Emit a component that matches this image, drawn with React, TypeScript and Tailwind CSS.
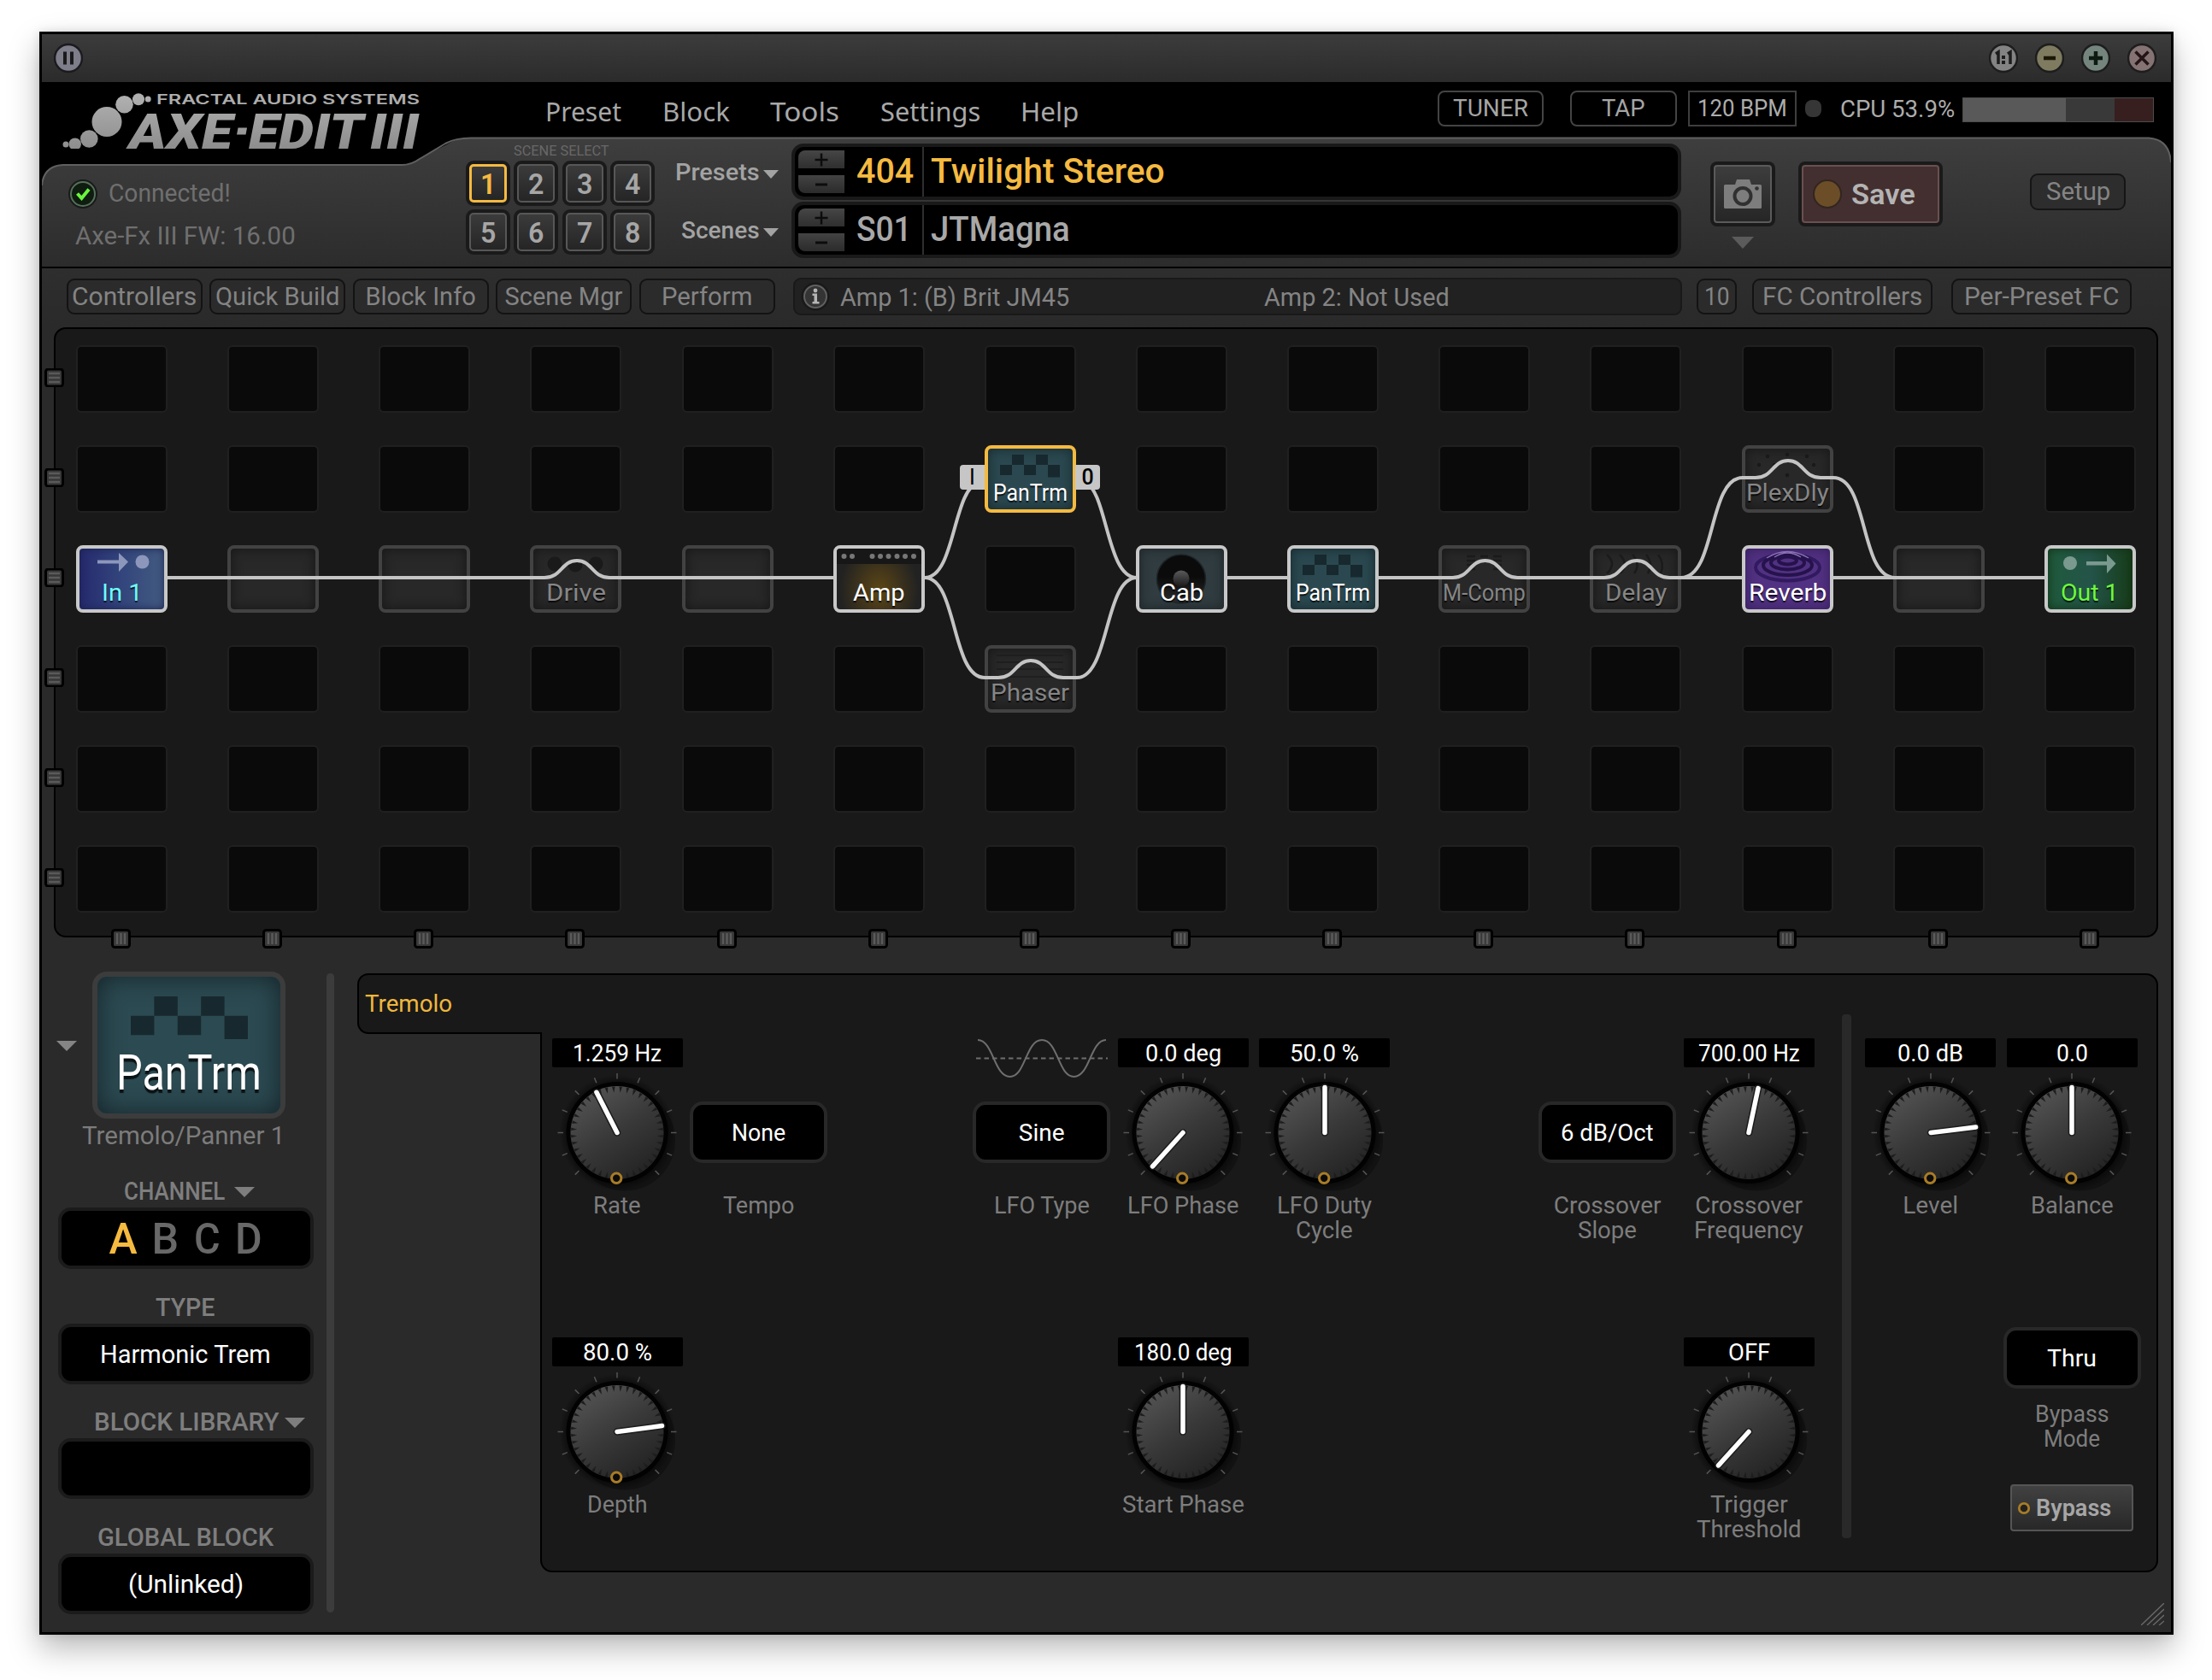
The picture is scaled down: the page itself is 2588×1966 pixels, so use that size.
import { useLayoutEffect, useRef, useState } from 'react';
import type { ReactNode } from 'react';

/* Single line of text, squeezed horizontally to a fixed width like a narrow DIN face. */
function Fit({ w, className = '', children }: { w: number; className?: string; children: ReactNode }) {
  const ref = useRef<HTMLSpanElement>(null);
  const [scale, setScale] = useState(1);
  const width = w + 3;
  useLayoutEffect(() => {
    if (ref.current) setScale(width / ref.current.offsetWidth);
  }, [width]);
  return (
    <span className={`inline-block shrink-0 text-left ${className}`} style={{ width }}>
      <span ref={ref} className="inline-block origin-left whitespace-nowrap" style={{ transform: `scaleX(${scale})` }}>
        {children}
      </span>
    </span>
  );
}

function Tri({ className = '' }: { className?: string }) {
  return (
    <svg viewBox="0 0 24 12" preserveAspectRatio="none" className={`shrink-0 fill-current ${className}`}>
      <path d="M0 0H24L12 12Z" />
    </svg>
  );
}

/* ---------- Title bar ---------- */

function TitleBar() {
  return (
    <div className="flex h-[56px] shrink-0 items-center justify-between bg-linear-to-b from-[#3c3c3c] to-[#2b2b2b] pr-[17px] pl-[14px]">
      <svg width="34" height="36" viewBox="0 0 34 36">
        <circle cx="17" cy="18" r="16" fill="#7d7e89" stroke="#1b1b1f" strokeWidth="2.5" />
        <path d="M13 10.500V25.500M21 10.500V25.500" stroke="#1a1a1c" strokeWidth="4" />
      </svg>
      <div className="flex gap-[20px]">
        <svg width="34" height="36" viewBox="0 0 34 36">
          <circle cx="17" cy="18" r="16" fill="#838383" stroke="#1d1d1d" strokeWidth="2.5" />
          <path d="M8 13L11 11V25M22 13L25 11V25" fill="none" stroke="#1c1c1c" strokeWidth="3.500" />
          <path d="M15 15h4v4h-4zM15 21h4v4h-4z" fill="#1c1c1c" />
        </svg>
        <svg width="34" height="36" viewBox="0 0 34 36">
          <circle cx="17" cy="18" r="16" fill="#7e7b60" stroke="#1d1d1d" strokeWidth="2.5" />
          <path d="M10 18H24" stroke="#1c1804" strokeWidth="4.500" />
        </svg>
        <svg width="34" height="36" viewBox="0 0 34 36">
          <circle cx="17" cy="18" r="16" fill="#74857d" stroke="#1d1d1d" strokeWidth="2.5" />
          <path d="M9 18H25M17 10V26" stroke="#0d1a12" strokeWidth="4.500" />
        </svg>
        <svg width="34" height="36" viewBox="0 0 34 36">
          <circle cx="17" cy="18" r="16" fill="#857374" stroke="#1d1d1d" strokeWidth="2.5" />
          <path d="M9.500 10.500L24.500 25.500M24.500 10.500L9.500 25.500" stroke="#241416" strokeWidth="3.500" />
        </svg>
      </div>
    </div>
  );
}

/* ---------- Header ---------- */

function Logo() {
  return (
    <svg width="440" height="92" viewBox="70 100 440 92" className="ml-[21px] mt-[4px] block">
      <defs>
        <linearGradient id="silver" gradientUnits="userSpaceOnUse" x1="0" y1="105" x2="0" y2="176">
          <stop offset="0" stopColor="#b4b4b4" />
          <stop offset="1" stopColor="#8c8c8c" />
        </linearGradient>
      </defs>
      <g fill="url(#silver)">
        <circle cx="125" cy="142.500" r="17.500" />
        <circle cx="145.500" cy="122.300" r="10.300" />
        <circle cx="162" cy="116.300" r="7" />
        <circle cx="173.200" cy="116" r="3.500" />
        <circle cx="104.300" cy="162.500" r="10.300" />
        <path d="M83 174A7.200 7.200 0 1 1 92.500 174Z" />
        <circle cx="77" cy="169" r="3.500" />
        <text x="183" y="121.500" fontSize="16" textLength="308" lengthAdjust="spacingAndGlyphs" fontFamily="Inter, sans-serif" fontWeight="600">FRACTAL AUDIO SYSTEMS</text>
        <g fontSize="58" fontFamily="Roboto, sans-serif" fontWeight="900" fontStyle="italic">
          <text x="151" y="173.500" textLength="121" lengthAdjust="spacingAndGlyphs">AXE</text>
          <text x="291" y="173.500" textLength="134" lengthAdjust="spacingAndGlyphs">EDIT</text>
          <text x="433" y="173.500" textLength="57" lengthAdjust="spacingAndGlyphs">III</text>
        </g>
        <path d="M278.500 149.500H289L287.500 157.500H277Z" />
      </g>
    </svg>
  );
}

function SceneButton({ n, active }: { n: number; active?: boolean }) {
  return (
    <div className="rounded-[9px] bg-[#1a1a1a] p-[4px]">
      <div className={`flex h-[45px] w-[44px] items-center justify-center rounded-[5px] bg-linear-to-b from-[#3b3b3b] to-[#252525] text-[34px] leading-none font-semibold ${active ? 'border-[3px] border-[#f5ba40] text-[#f5ba40]' : 'border-2 border-[#575757] text-[#a6a6a6]'}`}>
        <Fit w={15}>{n}</Fit>
      </div>
    </div>
  );
}

function Stepper() {
  return (
    <div className="ml-[4px] flex w-[54px] flex-col gap-[8px] pt-[4px]">
      <div className="flex h-[21px] items-center justify-center rounded-tl-[8px] bg-linear-to-b from-[#464646] to-[#2f2f2f]">
        <svg width="16" height="16" viewBox="0 0 16 16"><path d="M0.500 8H15.500M8 0.500V15.500" stroke="#0c0c0c" strokeWidth="2.500" /></svg>
      </div>
      <div className="flex h-[21px] items-center justify-center rounded-bl-[8px] bg-linear-to-b from-[#434343] to-[#2b2b2b]">
        <svg width="16" height="16" viewBox="0 0 16 16"><path d="M1 8H15" stroke="#0c0c0c" strokeWidth="3" /></svg>
      </div>
    </div>
  );
}

type DisplayProps = { label: string; labelW: number; num: string; numW: number; name: string; nameW: number; tone: string };
function DisplayRow({ label, labelW, num, numW, name, nameW, tone }: DisplayProps) {
  return (
    <div className="flex h-[66px]">
      <div className="flex w-[160px] items-center justify-end gap-[4px] pt-[1px] pr-[15px] text-[28px] font-medium text-[#a3a3a3]">
        <Fit w={labelW}>{label}</Fit>
        <Tri className="mt-[4px] h-[10px] w-[18px]" />
      </div>
      <div className={`flex w-[1041px] rounded-[14px] border-4 border-[#191919] bg-black text-[40px] leading-[58px] font-medium ${tone}`}>
        <Stepper />
        <div className="flex w-[93px] border-r-2 border-[#2e2e2e] pl-[14px]">
          <Fit w={numW}>{num}</Fit>
        </div>
        <Fit w={nameW} className="ml-[8px]">{name}</Fit>
      </div>
    </div>
  );
}

function Header() {
  return (
    <div className="relative flex h-[218px] shrink-0 border-b-2 border-black bg-black">
      <svg className="absolute top-0 left-0" width="2491" height="216" viewBox="49 96 2491 216">
        <defs>
          <linearGradient id="panel" gradientUnits="userSpaceOnUse" x1="0" y1="160" x2="0" y2="312">
            <stop offset="0" stopColor="#3e3e3e" />
            <stop offset="1" stopColor="#2c2c2c" />
          </linearGradient>
        </defs>
        <path d="M49 314V217Q51 194 74 193H472Q481 193 489 186L523 169Q534 161.500 551 161.500H2514Q2538 163 2540 190V314Z" fill="url(#panel)" />
        <path d="M49 217Q51 194 74 193H470Q481 193 491 186L521 168Q533 161.500 551 161.500H2514Q2538 163 2540 190" fill="none" stroke="#606060" strokeWidth="2" />
      </svg>

      <div className="relative flex w-[496px] flex-col">
        <div className="h-[97px]"><Logo /></div>
        <div className="flex h-[68px] items-center pl-[31px] text-[29px] text-[#6f6f6f]">
          <svg width="34" height="36" viewBox="0 0 34 36" className="mr-[13px]">
            <circle cx="17" cy="18" r="15.500" fill="#0f1c10" stroke="#1a1a1a" strokeWidth="3" />
            <circle cx="17" cy="18" r="14" fill="none" stroke="#55705a" strokeWidth="2" />
            <path d="M10.500 17.500L15.500 23L24 12.500" fill="none" stroke="#69f53e" strokeWidth="4" />
          </svg>
          <Fit w={140}>Connected!</Fit>
        </div>
        <div className="flex h-[32px] items-center pl-[39px] text-[29px] text-[#6f6f6f]">
          <Fit w={255}>Axe-Fx III FW: 16.00</Fit>
        </div>
      </div>

      <div className="relative flex flex-1 flex-col">
        <div className="flex h-[64px] items-start pt-[10px]">
          <div className="flex w-[1137px] gap-[47.500px] pl-[93px] pt-[4px] font-['Noto_Sans'] text-[30px] leading-[42px] text-[#a8a8a8]">
            <Fit w={86}>Preset</Fit>
            <Fit w={76}>Block</Fit>
            <Fit w={78}>Tools</Fit>
            <Fit w={114}>Settings</Fit>
            <Fit w={65}>Help</Fit>
          </div>
          <div className="flex h-[42px] w-[124px] items-center justify-center rounded-[8px] border-2 border-[#444] text-[28px] text-[#a5a5a5]"><Fit w={85}>TUNER</Fit></div>
          <div className="ml-[31px] flex h-[42px] w-[125px] items-center justify-center rounded-[8px] border-2 border-[#444] text-[28px] text-[#a5a5a5]"><Fit w={48}>TAP</Fit></div>
          <div className="ml-[13px] flex h-[42px] w-[127px] items-center justify-center border-2 border-[#3e3e3e] text-[28px] text-[#acacac]"><Fit w={102}>120 BPM</Fit></div>
          <div className="ml-[10px] mt-[11px] h-[20px] w-[19px] rounded-[8px] bg-[#363636]" />
          <div className="ml-[22px] flex h-[44px] items-center text-[28px] text-[#acacac]"><Fit w={131}>CPU 53.9%</Fit></div>
          <div className="ml-[9px] mt-[8px] flex h-[29px] w-[224px] border border-[#4c4c4c]">
            <div className="w-[120px] bg-[#595959]" />
            <div className="flex-1 bg-[#393939]" />
            <div className="w-[45px] bg-[#371f20]" />
          </div>
        </div>

        <div className="flex">
          <div className="w-[221px]">
            <div className="mt-[3px] flex h-[28px] items-center justify-center pl-[3px] text-[16px] text-[#686868]"><Fit w={109}>SCENE SELECT</Fit></div>
            <div className="mt-[-3px] grid grid-cols-[repeat(4,52px)] justify-between gap-y-[4px]">
              {[1, 2, 3, 4, 5, 6, 7, 8].map((n) => <SceneButton key={n} n={n} active={n === 1} />)}
            </div>
          </div>
          <div className="flex flex-col gap-[2px] pt-[8px]">
            <DisplayRow label="Presets" labelW={96} num="404" numW={64} name="Twilight Stereo" nameW={271} tone="text-[#f5ba40]" />
            <DisplayRow label="Scenes" labelW={89} num="S01" numW={62} name="JTMagna" nameW={160} tone="text-[#a8a8a8]" />
          </div>
          <div className="ml-[34px] mt-[29px] flex flex-col items-center">
            <div className="h-[76px] w-[76px] rounded-[8px] bg-[#1a1a1a] p-[4px]">
              <div className="flex h-[68px] items-center justify-center rounded-[4px] border-2 border-[#5a5a5a] bg-linear-to-b from-[#3d3d3d] to-[#262626]">
                <svg width="44" height="34" viewBox="0 0 44 34" className="mr-[1px]">
                  <path d="M1.500 6H13L15 0H30L32 6H42.500Q44 6 44 7.500V32.500Q44 34 42.500 34H1.500Q0 34 0 32.500V7.500Q0 6 1.500 6Z" fill="#7d7d7d" />
                  <circle cx="22" cy="19.500" r="9.500" fill="#7d7d7d" stroke="#303030" strokeWidth="4" />
                  <circle cx="38.500" cy="10.500" r="2.300" fill="#303030" />
                </svg>
              </div>
            </div>
            <Tri className="mt-[12px] h-[14px] w-[26px] text-[#5b5b5b]" />
          </div>
          <div className="ml-[27px] mt-[29px] h-[76px] w-[169px] rounded-[8px] bg-[#1a1a1a] p-[4px]">
            <div className="flex h-[68px] items-center rounded-[4px] border-2 border-[#6a5050] bg-[#432f2f] pl-[11px] text-[34px] font-semibold text-[#b4b4b4]">
              <div className="mr-[11px] h-[34px] w-[34px] rounded-full border-2 border-[#33251f] bg-[#6b4e28]" />
              <Fit w={72}>Save</Fit>
            </div>
          </div>
          <div className="ml-[102px] mt-[43px] flex h-[43px] w-[112px] items-center justify-center rounded-[9px] border-2 border-[#151515] bg-[#2d2d2d] text-[29px] text-[#848484]"><Fit w={72}>Setup</Fit></div>
        </div>
      </div>
    </div>
  );
}

/* ---------- Tool bar ---------- */

function ToolButton({ label, w, className }: { label: string; w: number; className: string }) {
  return (
    <div className={`flex h-[42px] items-center justify-center rounded-[9px] border-2 border-[#131313] bg-[#2b2b2b] ${className}`}>
      <Fit w={w}>{label}</Fit>
    </div>
  );
}

function ToolBar() {
  return (
    <div className="flex h-[69px] shrink-0 items-start bg-linear-to-b from-[#2e2e2e] to-[#2a2a2a] pt-[12px] pl-[28.500px] text-[29px] leading-none text-[#848484]">
      <div className="flex gap-[8.500px]">
        <ToolButton label="Controllers" w={143} className="w-[159px]" />
        <ToolButton label="Quick Build" w={143} className="w-[159px]" />
        <ToolButton label="Block Info" w={126} className="w-[159px]" />
        <ToolButton label="Scene Mgr" w={135} className="w-[159px]" />
        <ToolButton label="Perform" w={103} className="w-[159px]" />
      </div>
      <div className="ml-[21px] mt-[-1px] flex h-[44px] w-[1040px] items-center rounded-[9px] border-2 border-[#191919] bg-[#212121] pl-[7px]">
        <svg width="34" height="34" viewBox="0 0 34 34">
          <circle cx="17" cy="17" r="16.500" fill="#191919" />
          <circle cx="17" cy="17" r="13" fill="#343434" stroke="#606060" strokeWidth="2" />
          <path d="M13.500 13.500H19V23H21.500V25.500H13.500V23H15.500V16H13.500Z" fill="#b5b5b5" />
          <circle cx="17" cy="10" r="2.400" fill="#b5b5b5" />
        </svg>
        <Fit w={265} className="ml-[12px] pt-[3px]">Amp 1: (B) Brit JM45</Fit>
        <Fit w={214} className="ml-[228px] pt-[3px]">Amp 2: Not Used</Fit>
      </div>
      <ToolButton label="10" w={27} className="ml-[17.500px] w-[47px]" />
      <ToolButton label="FC Controllers" w={184} className="ml-[18px] w-[211px]" />
      <ToolButton label="Per-Preset FC" w={179} className="ml-[22px] w-[211px]" />
    </div>
  );
}

/* ---------- Signal grid ---------- */

function Checkers({ className }: { className: string }) {
  return (
    <svg viewBox="0 0 70 27" preserveAspectRatio="none" className={`fill-[#17292e] ${className}`}>
      <path d="M14 0H28V12H14ZM42 0H56V12H42ZM0 12H14V24H0ZM28 12H42V24H28ZM56 12H70V26.500H56Z" />
    </svg>
  );
}

const art: Record<string, ReactNode> = {
  in: (
    <g fill="#8c97bb">
      <path d="M25 17.500H50V9L61 19.500L50 31V21.500H25Z" />
      <circle cx="77.500" cy="19.500" r="8" />
    </g>
  ),
  out: (
    <g fill="#7a998f">
      <circle cx="30" cy="21" r="8" />
      <path d="M49 19H73V10.500L83.500 21.500L73 33V23.500H49Z" />
    </g>
  ),
  amp: (
    <g>
      <rect x="4" y="4" width="99" height="18" fill="#171717" />
      {[12.500, 22, 45.500, 55, 64.500, 74.500, 84, 94].map((x) => <circle key={x} cx={x} cy="13" r="3" fill="#777" />)}
    </g>
  ),
  cab: (
    <g>
      <defs>
        <linearGradient id="horn" x1="0" y1="0" x2="0" y2="1">
          <stop offset="0" stopColor="#5a5a5a" />
          <stop offset="1" stopColor="#1a1a1a" />
        </linearGradient>
        <linearGradient id="cone" x1="0" y1="0" x2="0" y2="1">
          <stop offset="0" stopColor="#0b0b0b" />
          <stop offset="0.450" stopColor="#0b0b0b" />
          <stop offset="1" stopColor="#2a2c2d" />
        </linearGradient>
      </defs>
      <circle cx="53" cy="39.500" r="28.500" fill="url(#cone)" stroke="#1e2527" strokeWidth="1.500" />
      <circle cx="53" cy="39" r="9.500" fill="url(#horn)" />
    </g>
  ),
  reverb: (
    <g fill="none" stroke="#26124c" strokeWidth="4">
      <ellipse cx="53.500" cy="26" rx="37.500" ry="15.500" stroke="#311a60" />
      <ellipse cx="53.500" cy="23.500" rx="28.500" ry="11.500" />
      <ellipse cx="53.500" cy="20.500" rx="19.500" ry="8" />
      <ellipse cx="53.500" cy="18" rx="10.500" ry="4.500" />
      <path d="M29 15Q53 0 78 15M38 14Q53 4 69 14" stroke="#8a72b4" strokeWidth="1.300" />
    </g>
  ),
  drive: (
    <g fill="#1a1a1a">
      <circle cx="29" cy="22" r="8.500" />
      <circle cx="53" cy="23" r="8.500" />
      <circle cx="77" cy="22" r="8.500" />
    </g>
  ),
  comp: <path d="M33 13H43M49 13H58M64 13H74M33 18H43M49 18H58M64 18H74M33 23H43M64 23H74M33 28H43M64 28H74" stroke="#1b1b1b" strokeWidth="2.500" />,
  delay: <path d="M20 11Q32 22 20 33M35 11Q46 22 36 33M50 11Q60 22 52 33M66 11Q75 22 68 33M80 11Q88 22 83 33" fill="none" stroke="#1b1b1b" strokeWidth="2.500" />,
  plex: (
    <g fill="#191919">
      {[[20, 23], [30, 13], [53, 11], [76, 13], [84, 23], [53, 35], [38, 23], [68, 23]].map(([x, y]) => <circle key={`${x}-${y}`} cx={x} cy={y} r="2.200" />)}
    </g>
  ),
  phaser: <path d="M14 12H92M14 20H92M14 28H92M14 37H92" stroke="#1d1d1d" strokeWidth="1.300" />,
};

type Block = { label?: string; w?: number; art?: string; skin: string; text?: string };
const off = 'border-[#424242] bg-[#282828] shadow-[inset_0_0_14px_#161616]';
const dim = 'text-[#868686]';
const teal = 'bg-[#2b4850] shadow-[inset_0_0_14px_#16282d]';
const blocks: Record<string, Block> = {
  '2-0': { label: 'In 1', w: 45, art: 'in', skin: 'border-[#c8c8c8] bg-linear-to-r from-[#262a6e] via-[#33457c] to-[#435b80] shadow-[inset_0_0_10px_#1c2350]', text: 'text-[#6ffcfb]' },
  '2-1': { skin: off },
  '2-2': { skin: off },
  '2-3': { label: 'Drive', w: 67, art: 'drive', skin: off, text: dim },
  '2-4': { skin: off },
  '2-5': { label: 'Amp', w: 58, art: 'amp', skin: 'border-[#c8c8c8] bg-[radial-gradient(ellipse_46px_56px_at_50%_68%,#5c4615,#222)]', text: 'text-white' },
  '1-6': { label: 'PanTrm', w: 84, art: 'pan', skin: `border-[#f5ba40] ${teal}`, text: 'text-white' },
  '3-6': { label: 'Phaser', w: 89, art: 'phaser', skin: off, text: dim },
  '2-7': { label: 'Cab', w: 48, art: 'cab', skin: 'border-[#c8c8c8] bg-[#303c40] shadow-[inset_0_0_14px_#1d2426]', text: 'text-white' },
  '2-8': { label: 'PanTrm', w: 84, art: 'pan', skin: `border-[#c8c8c8] ${teal}`, text: 'text-white' },
  '2-9': { label: 'M-Comp', w: 94, art: 'comp', skin: off, text: dim },
  '2-10': { label: 'Delay', w: 69, art: 'delay', skin: off, text: dim },
  '1-11': { label: 'PlexDly', w: 94, art: 'plex', skin: off, text: dim },
  '2-11': { label: 'Reverb', w: 88, art: 'reverb', skin: 'border-[#c8c8c8] bg-[#513181] shadow-[inset_0_0_14px_#351d5c]', text: 'text-white' },
  '2-12': { skin: off },
  '2-13': { label: 'Out 1', w: 65, art: 'out', skin: 'border-[#c8c8c8] bg-linear-to-r from-[#1f5a3c] via-[#245449] to-[#173c18] shadow-[inset_0_0_12px_#123017]', text: 'text-[#6dfb3d]' },
};

function Cell({ id }: { id: string }) {
  const b = blocks[id];
  if (!b) return <div className="h-[79px] rounded-[6px] border-2 border-[#202020] bg-[#0a0a0a]" />;
  return (
    <div className={`relative flex h-[79px] flex-col items-center justify-end overflow-hidden rounded-[8px] border-4 ${b.skin}`}>
      {b.art === 'pan' && <Checkers className="absolute top-[7px] left-[14px] h-[27px] w-[70px]" />}
      {b.art && art[b.art] && (
        <svg className="absolute -top-[4px] -left-[4px]" width="107" height="80" viewBox="0 0 107 80">{art[b.art]}</svg>
      )}
      {b.label && (
        <div className={`relative mb-[5px] flex h-[28px] items-center text-[28px] leading-[28px] [text-shadow:0_2px_1px_rgba(0,0,0,0.75)] ${b.text}`}>
          <Fit w={b.w ?? 0}>{b.label}</Fit>
        </div>
      )}
    </div>
  );
}

const hump = (cx: number, y: number) => `M${cx - 54} ${y}H${cx - 38}C${cx - 18} ${y} ${cx - 18} ${y - 20} ${cx} ${y - 20}S${cx + 18} ${y} ${cx + 38} ${y}H${cx + 54}`;

function Wires() {
  return (
    <svg className="absolute top-0 left-0" width="2411" height="665" viewBox="89 404 2411 665" fill="none" stroke="#c4c4c4" strokeWidth="4">
      <path d="M196 676H622M728 676H976M1436 676H1508M1613 676H1685M1790 676H1862M1967 676H2039M2145 676H2394" />
      <path d={hump(675, 676)} />
      <path d={hump(1737.500, 676)} />
      <path d={hump(1915, 676)} />
      <path d={hump(1206, 793)} />
      <path d={hump(2092, 559)} />
      <path d="M1082 676C1120 676 1113 793 1152 793M1082 676C1118 676 1114 573 1146 563" />
      <path d="M1330 676C1292 676 1298 793 1260 793M1330 676C1294 676 1296 573 1268 563" />
      <path d="M1967 676C2008 676 1998 559 2039 559M2145 559C2186 559 2176 676 2217 676" />
    </svg>
  );
}

function SignalGrid() {
  const rows = [0, 1, 2, 3, 4, 5];
  const cols = [0, 1, 2, 3, 4, 5, 6, 7, 8, 9, 10, 11, 12, 13];
  return (
    <div className="relative ml-[14px] h-[714px] w-[2462px] shrink-0 rounded-[14px] border-2 border-black bg-[#191919] pt-[19px] pl-[24px]">
      <div className="relative w-[2410px]">
        <div className="grid grid-cols-[repeat(14,107px)] justify-between gap-y-[38px]">
          {rows.map((r) => cols.map((c) => <Cell key={`${r}-${c}`} id={`${r}-${c}`} />))}
        </div>
        <Wires />
        <div className="absolute top-[140px] left-[1034px] flex h-[29px] w-[29px] items-center justify-center rounded-l-[4px] bg-[#c6c6c6] text-[25px] leading-none text-black">I</div>
        <div className="absolute top-[140px] left-[1169px] flex h-[29px] w-[29px] items-center justify-center rounded-r-[4px] bg-[#c6c6c6] text-[25px] leading-none font-medium text-black"><Fit w={11}>0</Fit></div>
      </div>
      <div className="absolute top-[46px] -left-[13px] flex flex-col gap-[95px]">
        {rows.map((r) => (
          <svg key={r} width="23" height="22" viewBox="0 0 23 22">
            <rect x="1.500" y="1" width="20" height="20" rx="3" fill="#383838" stroke="#000" strokeWidth="3" />
            <path d="M5 6H18M5 11H18M5 16H18" stroke="#5a5a5a" strokeWidth="2.500" />
          </svg>
        ))}
      </div>
      <div className="absolute -bottom-[15px] left-[65px] flex w-[2326px] justify-between">
        {cols.map((c) => (
          <svg key={c} width="23" height="23" viewBox="0 0 23 23">
            <rect x="1.500" y="1.500" width="20" height="20" rx="3" fill="#383838" stroke="#000" strokeWidth="3" />
            <path d="M7 5V18M11.500 5V18M16 5V18" stroke="#5a5a5a" strokeWidth="2.500" />
          </svg>
        ))}
      </div>
    </div>
  );
}

/* ---------- Block sidebar ---------- */

function SideBox({ className = '', children }: { className?: string; children?: ReactNode }) {
  return (
    <div className={`ml-[18.500px] flex w-[299px] items-center justify-center rounded-[15px] border-4 border-[#1b1b1b] bg-black text-white ${className}`}>
      {children}
    </div>
  );
}

function SideBar() {
  const head = 'flex h-[36px] items-center text-[29px] font-medium text-[#7e7e7e]';
  return (
    <div className="w-[333px] shrink-0 pt-[40px]">
      <div className="flex items-center pl-[17px]">
        <Tri className="mt-[2px] h-[12px] w-[24px] text-[#858585]" />
        <div className="ml-[18px] rounded-[17px] bg-[#3c3c3c] p-[6px]">
          <div className="relative flex h-[160px] w-[214px] items-end justify-center rounded-[11px] bg-[#2c4a52] shadow-[inset_0_0_30px_#142327]">
            <Checkers className="absolute top-[23px] left-[39px] h-[51px] w-[137px]" />
            <div className="relative mb-[17px] flex text-[58px] leading-[62px] text-white [text-shadow:0_4px_1px_rgba(0,0,0,0.75)]">
              <Fit w={167}>PanTrm</Fit>
            </div>
          </div>
        </div>
      </div>
      <div className="mt-[3px] flex h-[36px] items-center pl-[46.500px] text-[29px] text-[#7c7c7c]"><Fit w={234}>Tremolo/Panner 1</Fit></div>
      <div className={`mt-[29px] pl-[96px] ${head}`}>
        <Fit w={115}>CHANNEL</Fit>
        <Tri className="ml-[11px] h-[12px] w-[24px]" />
      </div>
      <SideBox className="h-[72px] gap-[17px] pt-[1px] text-[50px] leading-none font-medium">
        <Fit w={30} className="text-[#f5ba40]">A</Fit>
        <Fit w={29} className="text-[#686868]">B</Fit>
        <Fit w={28} className="text-[#686868]">C</Fit>
        <Fit w={29} className="text-[#686868]">D</Fit>
      </SideBox>
      <div className={`mt-[28px] justify-center pl-[3px] ${head}`}><Fit w={67}>TYPE</Fit></div>
      <SideBox className="h-[71px] pt-[2px] text-[29px]"><Fit w={197}>Harmonic Trem</Fit></SideBox>
      <div className={`mt-[27px] pl-[60.500px] ${head}`}>
        <Fit w={213}>BLOCK LIBRARY</Fit>
        <Tri className="ml-[7px] h-[12px] w-[24px]" />
      </div>
      <SideBox className="h-[71px]" />
      <div className={`mt-[28px] justify-center pl-[3px] ${head}`}><Fit w={203}>GLOBAL BLOCK</Fit></div>
      <SideBox className="h-[71px] pt-[2px] text-[29px]"><Fit w={132}>(Unlinked)</Fit></SideBox>
    </div>
  );
}

/* ---------- Parameters ---------- */

const ticks = [-135, -112.5, -90, -67.5, -45, -22.5, 0, 22.5, 45, 67.5, 90, 112.5, 135];
const notches = Array.from({ length: 40 }, (_, i) => i * 9 + 4.5);

function Dial({ angle, ring }: { angle: number; ring?: boolean }) {
  return (
    <svg width="160" height="147" viewBox="-80 -76.500 160 147">
      <defs>
        <linearGradient id="face" x1="0.150" y1="0.100" x2="0.700" y2="0.950">
          <stop offset="0" stopColor="#525252" />
          <stop offset="0.500" stopColor="#393939" />
          <stop offset="1" stopColor="#252525" />
        </linearGradient>
        <radialGradient id="shade">
          <stop offset="0.840" stopColor="#000" stopOpacity="0.500" />
          <stop offset="1" stopColor="#000" stopOpacity="0" />
        </radialGradient>
      </defs>
      <circle cx="9" cy="9" r="59" fill="#121212" />
      <circle r="68" fill="url(#shade)" />
      {ticks.map((a) => <path key={a} d="M0 -63V-69.500" transform={`rotate(${a})`} stroke="#555" strokeWidth="1.500" />)}
      <circle r="59.500" fill="#020202" />
      <circle r="54.500" fill="url(#face)" />
      {notches.map((a) => <path key={a} d="M-1.800 -54H1.800L0 -47Z" transform={`rotate(${a})`} fill="#1d1d1d" />)}
      <path d="M0 0V-53" transform={`rotate(${angle})`} stroke="#1c1c1c" strokeWidth="8.500" strokeLinecap="round" />
      <path d="M0 0V-53" transform={`rotate(${angle})`} stroke="#fff" strokeWidth="5.500" strokeLinecap="round" />
      {ring && <circle cx="-0.800" cy="53.300" r="5.700" fill="#0b0b0b" stroke="#a97c26" strokeWidth="3" />}
    </svg>
  );
}

type Line = [string, number];
function Caption({ lines }: { lines: Line[] }) {
  return (
    <div className="flex flex-col items-center text-[28px] leading-[29px] text-[#7d7d7d]">
      {lines.map(([t, w]) => <Fit key={t} w={w} className="h-[29px]">{t}</Fit>)}
    </div>
  );
}

function Knob({ value, angle, ring, lines, col }: { value: Line; angle: number; ring?: boolean; lines: Line[]; col: string }) {
  return (
    <div className={`flex flex-col items-center ${col}`}>
      <div className="flex h-[34px] w-[153px] items-center justify-center rounded-[2px] bg-black pt-[1px] text-[28px] leading-none text-white"><Fit w={value[1]}>{value[0]}</Fit></div>
      <Dial angle={angle} ring={ring} />
      <Caption lines={lines} />
    </div>
  );
}

function PickerBox({ value }: { value: Line }) {
  return (
    <div className="flex h-[72px] w-[161px] shrink-0 items-center justify-center rounded-[15px] border-4 border-[#282828] bg-black pt-[2px] text-[28px] leading-none text-white"><Fit w={value[1]}>{value[0]}</Fit></div>
  );
}

function Picker({ value, lines, col, wave }: { value: Line; lines: Line[]; col: string; wave?: boolean }) {
  return (
    <div className={`flex flex-col items-center ${col}`}>
      <div className="h-[74px]">
        {wave && (
          <svg width="154" height="48" viewBox="0 0 154 48" fill="none" stroke="#6e6e6e" strokeWidth="2">
            <path d="M2 2C20 2 21 45 39.500 45S58 2 77 2S96 45 114.500 45S134 2 152 2" />
            <path d="M0 23.500H154" strokeDasharray="5.500 4" />
          </svg>
        )}
      </div>
      <PickerBox value={value} />
      <div className="h-[35px]" />
      <Caption lines={lines} />
    </div>
  );
}

function Params() {
  return (
    <div className="ml-[27px] mt-[42px] flex">
      <div className="relative z-10 flex h-[71px] w-[216px] items-center rounded-l-[13px] border-2 border-r-0 border-black bg-[#191919] pl-[7px] text-[28px] text-[#f0b73e]">
        <Fit w={99}>Tremolo</Fit>
      </div>
      <div className="ml-[-2px] flex h-[701px] w-[1893px] rounded-[14px] rounded-tl-none border-2 border-black bg-[#191919] pt-[74px] pl-[5.500px]">
        <div className="grid auto-rows-[350px] grid-cols-[repeat(9,165.500px)]">
          <Knob col="col-start-1" value={['1.259 Hz', 101]} angle={-27} ring lines={[['Rate', 53]]} />
          <Picker col="col-start-2" value={['None', 60]} lines={[['Tempo', 80]]} />
          <Picker col="col-start-4" value={['Sine', 51]} lines={[['LFO Type', 109]]} wave />
          <Knob col="col-start-5" value={['0.0 deg', 86]} angle={-138} ring lines={[['LFO Phase', 127]]} />
          <Knob col="col-start-6" value={['50.0 %', 78]} angle={0} ring lines={[['LFO Duty', 108], ['Cycle', 64]]} />
          <Picker col="col-start-8" value={['6 dB/Oct', 106]} lines={[['Crossover', 123], ['Slope', 66]]} />
          <Knob col="col-start-9" value={['700.00 Hz', 116]} angle={12} lines={[['Crossover', 123], ['Frequency', 125]]} />
          <Knob col="col-start-1" value={['80.0 %', 78]} angle={82.5} ring lines={[['Depth', 68]]} />
          <Knob col="col-start-5" value={['180.0 deg', 112]} angle={0} lines={[['Start Phase', 140]]} />
          <Knob col="col-start-9" value={['OFF', 46]} angle={-138} lines={[['Trigger', 88], ['Threshold', 120]]} />
        </div>
        <div className="ml-[25.500px] mt-[-28px] h-[613px] w-[11px] rounded-[4px] bg-[#292929]" />
        <div className="ml-[10.500px] grid auto-rows-[350px] grid-cols-[repeat(2,165.500px)]">
          <Knob col="col-start-1" value={['0.0 dB', 74]} angle={83} ring lines={[['Level', 62]]} />
          <Knob col="col-start-2" value={['0.0', 34]} angle={0} ring lines={[['Balance', 94]]} />
          <div className="col-start-2 mt-[-12px] flex flex-col items-center">
            <PickerBox value={['Thru', 55]} />
            <div className="h-[15px]" />
            <Caption lines={[['Bypass', 84], ['Mode', 63]]} />
            <div className="mt-[39px] flex h-[55px] w-[144px] shrink-0 items-center rounded-[4px] border-2 border-[#555] bg-linear-to-b from-[#414141] to-[#282828] pl-[6px] text-[28px] font-semibold text-[#a6a6a6]">
              <svg width="16" height="16" viewBox="0 0 16 16" className="mr-[6px]"><circle cx="8" cy="8" r="5.700" fill="#222" stroke="#a97c26" strokeWidth="2.800" /></svg>
              <Fit w={85}>Bypass</Fit>
            </div>
          </div>
        </div>
      </div>
    </div>
  );
}

export default function App() {
  return (
    <div className="h-[1966px] w-[2588px] overflow-hidden bg-white pt-[37px] pl-[46px] font-['Roboto',sans-serif] antialiased">
      <div className="relative flex h-[1876px] w-[2497px] flex-col border-[3px] border-black bg-[#2a2a2a] shadow-[0_16px_34px_rgba(0,0,0,0.28),0_0_10px_rgba(0,0,0,0.12)]">
        <TitleBar />
        <Header />
        <ToolBar />
        <SignalGrid />
        <div className="flex flex-1">
          <SideBar />
          <div className="mt-[42px] h-[748px] w-[9px] rounded-full bg-[#3c3c3c]" />
          <Params />
        </div>
        <svg className="absolute right-[8px] bottom-[8px]" width="27" height="26" viewBox="0 0 27 26" stroke="#6b6b6b" strokeWidth="1.300">
          <path d="M0 26L27 0M7 26L27 7M14 26L27 14M21 26L27 21" />
        </svg>
      </div>
    </div>
  );
}
